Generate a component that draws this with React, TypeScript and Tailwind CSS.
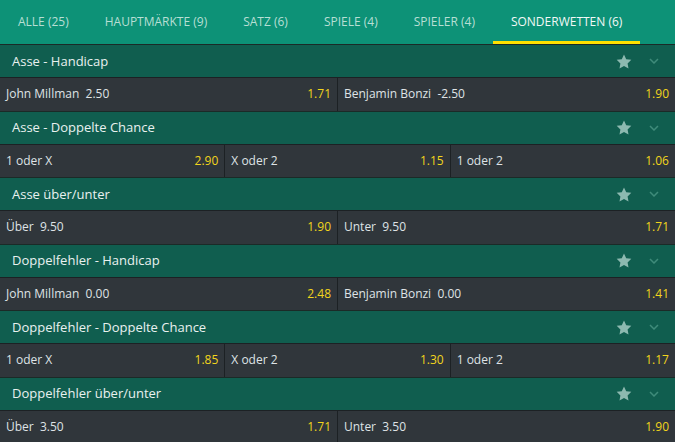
import React from "react";

type Pick = { label: string; odds: string };
type Market = { title: string; picks: Pick[] };

const tabs = [
  { label: "ALLE (25)" },
  { label: "HAUPTMÄRKTE (9)" },
  { label: "SATZ (6)" },
  { label: "SPIELE (4)" },
  { label: "SPIELER (4)" },
  { label: "SONDERWETTEN (6)", active: true },
];

const markets: Market[] = [
  {
    title: "Asse - Handicap",
    picks: [
      { label: "John Millman\u00a0\u00a02.50", odds: "1.71" },
      { label: "Benjamin Bonzi\u00a0\u00a0-2.50", odds: "1.90" },
    ],
  },
  {
    title: "Asse - Doppelte Chance",
    picks: [
      { label: "1 oder X", odds: "2.90" },
      { label: "X oder 2", odds: "1.15" },
      { label: "1 oder 2", odds: "1.06" },
    ],
  },
  {
    title: "Asse über/unter",
    picks: [
      { label: "Über\u00a0\u00a09.50", odds: "1.90" },
      { label: "Unter\u00a0\u00a09.50", odds: "1.71" },
    ],
  },
  {
    title: "Doppelfehler - Handicap",
    picks: [
      { label: "John Millman\u00a0\u00a00.00", odds: "2.48" },
      { label: "Benjamin Bonzi\u00a0\u00a00.00", odds: "1.41" },
    ],
  },
  {
    title: "Doppelfehler - Doppelte Chance",
    picks: [
      { label: "1 oder X", odds: "1.85" },
      { label: "X oder 2", odds: "1.30" },
      { label: "1 oder 2", odds: "1.17" },
    ],
  },
  {
    title: "Doppelfehler über/unter",
    picks: [
      { label: "Über\u00a0\u00a03.50", odds: "1.71" },
      { label: "Unter\u00a0\u00a03.50", odds: "1.90" },
    ],
  },
];

function Star() {
  return (
    <svg width="16" height="15" viewBox="0 0 24 23" className="fill-[#8db9b0]">
      <path d="M12 0.8l3.4 7.2 7.8 1-5.7 5.4 1.4 7.8L12 18.4l-6.9 3.8 1.4-7.8L0.8 9l7.8-1z" />
    </svg>
  );
}

function Chevron() {
  return (
    <svg width="10" height="6" viewBox="0 0 10 6" fill="none" className="stroke-[#3f8b7a]">
      <path d="M1 1l4 4 4-4" strokeWidth="1.5" />
    </svg>
  );
}

function MarketBlock({ market }: { market: Market }) {
  const cols = market.picks.length === 3 ? "grid-cols-3" : "grid-cols-2";
  return (
    <section>
      <div className="h-[33px] bg-[#105e4f] border-t border-[#1b2a27] flex items-center justify-between pl-3 pr-[16px]">
        <span className="text-[13px] text-[#e9f1ef] pt-px">{market.title}</span>
        <div className="flex items-center gap-[17px]">
          <Star />
          <Chevron />
        </div>
      </div>
      <div className={`grid ${cols} gap-px bg-[#1c2124] h-[33.5px] border-t border-[#1c2124]`}>
        {market.picks.map((p) => (
          <div key={p.label} className="bg-[#30363b] flex items-center justify-between px-[6px]">
            <span className="text-[12px] text-[#dfe3e6]">{p.label}</span>
            <span className="text-[12px] text-[#f2d51c]">{p.odds}</span>
          </div>
        ))}
      </div>
    </section>
  );
}

export default function App() {
  return (
    <div
      className="w-[675px] h-[442px] overflow-hidden bg-[#30363b]"
      style={{ fontFamily: '"Open Sans", "Liberation Sans", sans-serif' }}
    >
      <nav className="h-[44px] bg-[#0d9277] flex">
        {tabs.map((t) => (
          <div
            key={t.label}
            className={`px-[18px] flex items-center relative text-[12px] ${
              t.active ? "text-[#f2f8f6]" : "text-[#b7dfd4]"
            }`}
          >
            {t.label}
            {t.active && <span className="absolute left-0 right-0 bottom-0 h-[3px] bg-[#ffe000]" />}
          </div>
        ))}
      </nav>
      {markets.map((m) => (
        <MarketBlock key={m.title} market={m} />
      ))}
    </div>
  );
}
